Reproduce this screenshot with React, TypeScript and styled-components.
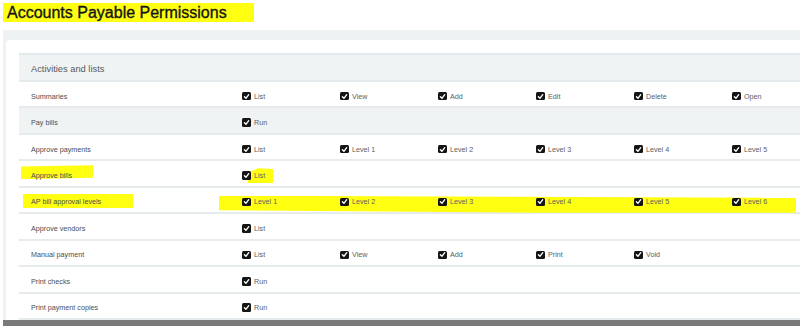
import React from 'react';
import styled, { createGlobalStyle } from 'styled-components';

const GlobalStyle = createGlobalStyle`
  html, body {
    margin: 0;
    padding: 0;
    background: #ffffff;
    overflow: hidden;
  }
  body {
    font-family: 'Liberation Sans', Arial, sans-serif;
  }
`;

const Page = styled.div`
  width: 800px;
  height: 326px;
  overflow: hidden;
  background: #ffffff;
`;

const TitleBar = styled.div`
  height: 30px;
  padding: 3px 0 0 3px;
  box-sizing: border-box;
`;

const Title = styled.h1`
  display: inline-block;
  margin: 0;
  padding: 1px 27px 1px 4px;
  height: 19px;
  box-sizing: border-box;
  background: #ffff12;
  font-size: 16px;
  line-height: 17px;
  font-weight: normal;
  color: #151515;
  -webkit-text-stroke: 0.35px #151515;
  white-space: nowrap;
`;

const Panel = styled.div`
  margin-left: 3px;
  padding: 10px 0 0 3px;
  background: #eef2f3;
  border-bottom: 6px solid #7a7a7a;
`;

const Card = styled.div`
  background: #ffffff;
  border-top-left-radius: 4px;
  padding: 13px 0 0 13px;
`;

const Table = styled.div`
  width: 830px;
`;

const HeaderRow = styled.div`
  height: 29px;
  box-sizing: border-box;
  display: flex;
  align-items: center;
  padding: 2px 0 0 12px;
  background: #eff3f4;
  border-top: 2px solid #e4e9ec;
  border-bottom: 2px solid #e4e9ec;
  font-size: 9.3px;
  color: #555b60;
`;

const Row = styled.div<{ $shaded?: boolean }>`
  position: relative;
  height: 26.45px;
  box-sizing: border-box;
  display: grid;
  grid-template-columns: 223px repeat(6, 98px);
  align-items: center;
  padding-top: 4px;
  background: ${p => (p.$shaded ? '#f0f3f4' : '#ffffff')};
  border-bottom: 2px solid #e6ebee;
`;

const RowLabel = styled.div`
  position: relative;
  z-index: 1;
  padding-left: 12px;
  font-size: 7.2px;
  color: #4a4e52;
  white-space: nowrap;
`;

const Cell = styled.div`
  position: relative;
  z-index: 1;
  display: flex;
  align-items: center;
  gap: 3.5px;
  font-size: 7.2px;
  color: #5b6064;
  white-space: nowrap;
`;

const Box = styled.span`
  width: 8.5px;
  height: 8.5px;
  flex: none;
  display: inline-flex;
  align-items: center;
  justify-content: center;
  background: #151515;
  border-radius: 1.5px;
`;

const Marker = styled.div<{ $left: number; $top: number; $width: number; $height: number; $clip?: string }>`
  position: absolute;
  z-index: 0;
  left: ${p => p.$left}px;
  top: ${p => p.$top}px;
  width: ${p => p.$width}px;
  height: ${p => p.$height}px;
  background: #ffff12;
  clip-path: ${p => p.$clip || 'none'};
`;

type Mark = { left: number; top: number; width: number; height: number; clip?: string };

interface PermRow {
  label: string;
  perms: string[];
  shaded?: boolean;
  marks?: Mark[];
}

const rows: PermRow[] = [
  { label: 'Summaries', perms: ['List', 'View', 'Add', 'Edit', 'Delete', 'Open'] },
  { label: 'Pay bills', perms: ['Run'], shaded: true },
  { label: 'Approve payments', perms: ['List', 'Level 1', 'Level 2', 'Level 3', 'Level 4', 'Level 5'] },
  {
    label: 'Approve bills',
    perms: ['List'],
    marks: [
      { left: 2, top: 4, width: 72, height: 14, clip: 'polygon(0 8%, 100% 0, 100% 88%, 0 100%)' },
      { left: 229, top: 7, width: 25, height: 15, clip: 'polygon(0 30%, 40% 0, 100% 5%, 100% 100%, 0 100%)' },
    ],
  },
  {
    label: 'AP bill approval levels',
    perms: ['Level 1', 'Level 2', 'Level 3', 'Level 4', 'Level 5', 'Level 6'],
    marks: [
      { left: 4, top: 6, width: 110, height: 14 },
      { left: 200, top: 8, width: 577, height: 17, clip: 'polygon(0 0, 100% 12%, 100% 100%, 55% 100%, 0 85%)' },
    ],
  },
  { label: 'Approve vendors', perms: ['List'] },
  { label: 'Manual payment', perms: ['List', 'View', 'Add', 'Print', 'Void'] },
  { label: 'Print checks', perms: ['Run'] },
  { label: 'Print payment copies', perms: ['Run'] },
];

const Check = () => (
  <Box>
    <svg width="7" height="7" viewBox="0 0 10 10">
      <path d="M2 5.4 L4.2 7.6 L8.2 2.4" fill="none" stroke="#fff" strokeWidth="1.9" strokeLinecap="round" strokeLinejoin="round" />
    </svg>
  </Box>
);

const App: React.FC = () => {
  return (
    <Page>
      <GlobalStyle />
      <TitleBar>
        <Title>Accounts Payable Permissions</Title>
      </TitleBar>
      <Panel>
        <Card>
          <Table>
            <HeaderRow>Activities and lists</HeaderRow>
            {rows.map(row => (
              <Row key={row.label} $shaded={row.shaded}>
                {row.marks?.map((m, i) => (
                  <Marker key={i} $left={m.left} $top={m.top} $width={m.width} $height={m.height} $clip={m.clip} />
                ))}
                <RowLabel>{row.label}</RowLabel>
                {row.perms.map(p => (
                  <Cell key={p}>
                    <Check />
                    {p}
                  </Cell>
                ))}
              </Row>
            ))}
          </Table>
        </Card>
      </Panel>
    </Page>
  );
};

export default App;
